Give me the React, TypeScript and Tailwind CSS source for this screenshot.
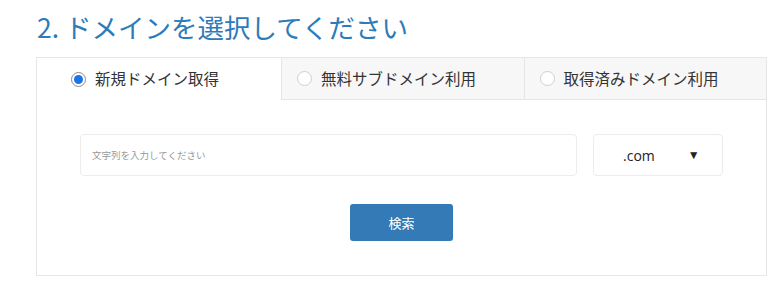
export default function App() {
  const tabs = ["新規ドメイン取得", "無料サブドメイン利用", "取得済みドメイン利用"];
  return (
    <div className="h-[287px] w-[780px] bg-white pt-[10px] font-['Noto_Sans_CJK_JP',sans-serif] text-[#333]">
      <h2 className="ml-[37px] text-[26.5px] leading-[34px] text-[#2d7bb9]">2. ドメインを選択してください</h2>
      <div className="ml-[36px] mt-[13px] h-[219px] w-[731px] border border-[#e6e6e6]">
        <div className="flex h-[42px]">
          {tabs.map((t, i) => (
            <div
              key={t}
              className={
                i === 0
                  ? "flex w-[244px] items-center gap-[9px] bg-white pl-[34px]"
                  : "flex flex-1 items-center gap-[9px] border-b border-l border-[#e6e6e6] bg-[#f7f7f7] pl-[15px]"
              }
            >
              {i === 0 ? (
                <span className="flex h-[15px] w-[15px] items-center justify-center rounded-full border border-[#8a8a8a]">
                  <span className="h-[9px] w-[9px] rounded-full bg-[#1a73e8]" />
                </span>
              ) : (
                <span className="h-[15px] w-[15px] rounded-full border border-[#cfcfcf] bg-white" />
              )}
              <span className="text-[15.5px]">{t}</span>
            </div>
          ))}
        </div>
        <div className="mt-[34px] flex pl-[43px]">
          <div className="flex h-[42px] w-[497px] items-center rounded-[4px] border border-[#ececec] pl-[11px] text-[9.5px] text-[#999]">
            文字列を入力してください
          </div>
          <div className="ml-[16px] flex h-[42px] w-[130px] items-center rounded-[4px] border border-[#ececec] pl-[29px] font-['Open_Sans',sans-serif] text-[14px] text-[#222]">
            <span>.com</span>
            <span className="ml-[33px] text-[12px]">▼</span>
          </div>
        </div>
        <div className="mt-[28px] flex justify-center">
          <button className="h-[37px] w-[103px] rounded-[3px] bg-[#337ab7] text-[13px] text-white">検索</button>
        </div>
      </div>
    </div>
  );
}
